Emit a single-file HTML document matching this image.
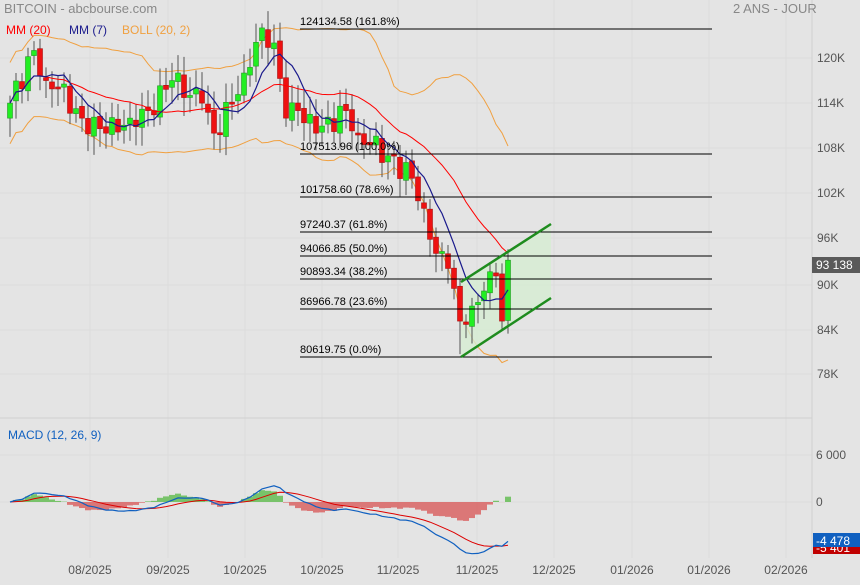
<!DOCTYPE html>
<html><head><meta charset="utf-8">
<style>
html,body{margin:0;padding:0;background:#e4e4e4;}
body{width:860px;height:580px;overflow:hidden;font-family:"Liberation Sans",sans-serif;}
svg text{font-family:"Liberation Sans",sans-serif;}
</style></head>
<body>
<svg id="c" width="860" height="580" viewBox="0 0 860 580" xmlns="http://www.w3.org/2000/svg">
<rect width="860" height="580" fill="#e4e4e4"/>
<g id="grid" stroke="#dcdcdc" stroke-width="1"></g>
<line x1="812" y1="0" x2="812" y2="558" stroke="#d0d0d0"/>
<line x1="0" y1="418" x2="812" y2="418" stroke="#d0d0d0"/>
<g id="bb"></g>
<polygon points="461,282 551,224 551,298 461,357" fill="#d6ecd2" opacity="0.8"/>
<g id="candles"></g>
<g id="lines"></g>
<g id="fib" font-size="11" fill="#000"></g>
<line x1="461" y1="282" x2="551" y2="224" stroke="#1e8c1e" stroke-width="2.5"/>
<line x1="461" y1="357" x2="551" y2="298" stroke="#1e8c1e" stroke-width="2.5"/>
<g id="macd"></g>
<text x="4" y="13" font-size="13" fill="#888">BITCOIN - abcbourse.com</text>
<text x="733" y="13" font-size="13" fill="#888">2 ANS - JOUR</text>
<text x="6" y="34" font-size="12" fill="#ff0000">MM (20)</text>
<text x="69" y="34" font-size="12" fill="#1a1a8c">MM (7)</text>
<text x="122" y="34" font-size="12" fill="#f0a040">BOLL (20, 2)</text>
<text x="8" y="439" font-size="12" fill="#1060c0">MACD (12, 26, 9)</text>
<g font-size="12" fill="#555">
<text x="817" y="62">120K</text><text x="817" y="107">114K</text><text x="817" y="152">108K</text>
<text x="817" y="197">102K</text><text x="817" y="242">96K</text><text x="817" y="289">90K</text>
<text x="817" y="334">84K</text><text x="817" y="378">78K</text>
<text x="816" y="459">6 000</text><text x="816" y="506">0</text>
</g>
<rect x="812" y="257" width="48" height="16" fill="#5a5a5a"/>
<text x="816" y="269" font-size="12" fill="#fff">93 138</text>
<rect x="813" y="541" width="47" height="13" fill="#c00000"/>
<text x="816" y="552" font-size="12" fill="#fff">-5 401</text>
<rect x="813" y="533" width="47" height="14" fill="#1060c0"/>
<text x="816" y="545" font-size="12" fill="#fff">-4 478</text>
<g font-size="12" fill="#555" text-anchor="middle">
<text x="90" y="574">08/2025</text><text x="168" y="574">09/2025</text><text x="245" y="574">10/2025</text>
<text x="322" y="574">10/2025</text><text x="398" y="574">11/2025</text><text x="477" y="574">11/2025</text>
<text x="554" y="574">12/2025</text><text x="632" y="574">01/2026</text><text x="709" y="574">01/2026</text>
<text x="786" y="574">02/2026</text>
</g>
</svg>
<script>
var NS="http://www.w3.org/2000/svg";
function el(p,t,a){var e=document.createElementNS(NS,t);for(var k in a)e.setAttribute(k,a[k]);document.getElementById(p).appendChild(e);return e;}
[90,168,245,322,398,477,554,632,709,786].forEach(function(x){el("grid","line",{x1:x,y1:0,x2:x,y2:558});});
[58,103,148,193,238,285,330,374,455,502].forEach(function(y){el("grid","line",{x1:0,y1:y,x2:812,y2:y});});
function Y(p){return 58+(120-p)/6*45.1;}
var kp=[[0,114],[4,121],[6,117],[8,116],[12,112],[16,110],[20,112],[23,113],[27,117],[32,114],[34,110],[37,114],[39,118],[42,124],[44,122],[46,112],[48,113],[51,110],[56,113],[58,110],[63,107],[67,104],[69,100],[71,94],[73,92],[75,85],[77,87],[79,89],[81,91],[82,85],[83,93.1]];
var C=[];
for(var i=0;i<84;i++){var j=0;while(j<kp.length-1&&kp[j+1][0]<i)j++;var a=kp[j],b=kp[Math.min(j+1,kp.length-1)];
var t=b[0]==a[0]?0:(i-a[0])/(b[0]-a[0]);var v=a[1]+(b[1]-a[1])*t;
var onk=kp.some(function(k){return k[0]==i;});if(!onk)v+=1.6*Math.sin(i*2.3);C.push(v);}
var O=[112];for(i=1;i<84;i++)O.push(C[i-1]+0.3*Math.sin(i*1.7));
for(i=0;i<84;i++){var x=10+i*6,o=O[i],c=C[i],hi=Math.max(o,c)+1+Math.abs(Math.sin(i*3.1))*1.5,lo=Math.min(o,c)-1-Math.abs(Math.cos(i*2.7))*1.5;
if(i==75)lo=80.6;if(i==42)hi=124.6;
el("candles","line",{x1:x,y1:Y(hi),x2:x,y2:Y(lo),stroke:"#555","stroke-width":1});
var up=c>=o;var y1=Y(Math.max(o,c)),y2=Y(Math.min(o,c));if(y2-y1<2)y2=y1+2;
el("candles","rect",{x:x-2.5,y:y1,width:5,height:y2-y1,fill:up?"#22ee22":"#ee1111",stroke:up?"#229922":"#aa1111","stroke-width":0.6});}
function ma(n){var r=[];for(var i=0;i<84;i++){var s=0,m=0;for(var k=Math.max(0,i-n+1);k<=i;k++){s+=C[k];m++;}r.push(s/m);}return r;}
var m20=ma(20),m7=ma(7),bu=[],bl=[];
for(i=0;i<84;i++){var s=0,m=0;for(var k=Math.max(0,i-19);k<=i;k++){s+=(C[k]-m20[i])*(C[k]-m20[i]);m++;}var sd=Math.sqrt(s/m);if(sd<2.7)sd=2.7;bu.push(m20[i]+2*sd);bl.push(m20[i]-2*sd);}
function pl(g,arr,col,w,sx,f){var p=arr.map(function(v,i){return (10+i*6)+","+f(v).toFixed(1);}).join(" ");el(g,"polyline",{points:p,fill:"none",stroke:col,"stroke-width":w});}
pl("bb",bu,"#f0a040",1,0,Y);pl("bb",bl,"#f0a040",1,0,Y);
pl("lines",m20,"#ff0000",1,0,Y);pl("lines",m7,"#1a1a8c",1.2,0,Y);
var fib=[[29,"124134.58  (161.8%)"],[154,"107513.96  (100.0%)"],[197,"101758.60  (78.6%)"],[232,"97240.37  (61.8%)"],[256,"94066.85  (50.0%)"],[279,"90893.34  (38.2%)"],[309,"86966.78  (23.6%)"],[357,"80619.75  (0.0%)"]];
fib.forEach(function(f){el("fib","line",{x1:300,y1:f[0],x2:712,y2:f[0],stroke:"#000","stroke-width":1});var t=el("fib","text",{x:300,y:f[0]-4});t.textContent=f[1];});
function ema(arr,n){var k=2/(n+1),r=[arr[0]];for(var i=1;i<arr.length;i++)r.push(arr[i]*k+r[i-1]*(1-k));return r;}
var e12=ema(C,12),e26=ema(C,26),M=C.map(function(v,i){return e12[i]-e26[i];});var S=ema(M,9);
function YM(v){return 502-v*7.8;}
for(i=0;i<84;i++){var h=(M[i]-S[i])*1.4;var x=10+i*6;el("macd","rect",{x:x-3,y:Math.min(502,502-h*7.8),width:6,height:Math.abs(h*7.8),fill:h>=0?"#6cbf5c":"#d96a6a",opacity:0.9});}
pl("macd",S,"#dd0000",1,0,YM);pl("macd",M,"#1060c0",1.2,0,YM);
</script>
</body></html>
